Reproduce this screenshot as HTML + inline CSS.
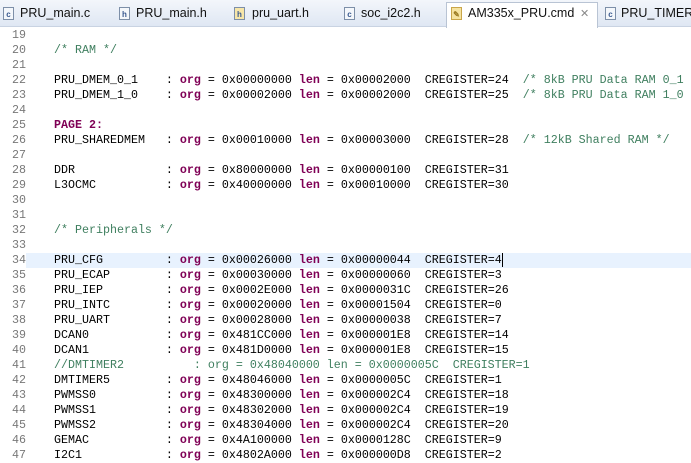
<!DOCTYPE html><html><head><style>
body{margin:0;width:691px;height:459px;overflow:hidden;background:#fff;position:relative;font-family:"Liberation Sans",sans-serif}
.bar{position:absolute;left:0;top:0;width:691px;height:27px;background:linear-gradient(#f3f6fb,#dfe7f3);border-bottom:1px solid #c9d3e2;box-sizing:border-box}
.t{position:absolute;top:6px;font-size:12.5px;color:#111;white-space:nowrap}
.ic{position:absolute;top:7px;width:11px;height:13px;border:1px solid #7d8fa8;background:#f4f7fb;font:bold 8px "Liberation Sans",sans-serif;color:#3a5a90;text-align:center;line-height:13px;box-sizing:border-box}
.act{position:absolute;left:446px;top:2px;width:152px;height:26px;background:#fff;border:1px solid #b9c4d4;border-bottom:none;box-sizing:border-box}
.code{position:absolute;top:28px;left:0;width:691px;font-family:"Liberation Mono",monospace;font-size:11.67px;line-height:15px;color:#000}
.l{height:15px;position:relative;white-space:pre}
.n{display:inline-block;width:26px;text-align:right;color:#787878;padding-right:28px}
.c{color:#3f7f5f}.k{color:#7f0055;font-weight:bold}
</style></head><body>
<div class="bar">
<div class="ic" style="left:3px">c</div><div class="t" style="left:20px">PRU_main.c</div>
<div class="ic" style="left:119px">h</div><div class="t" style="left:136px">PRU_main.h</div>
<div class="ic" style="left:234px;background:#f7e6a8">h</div><div class="t" style="left:252px">pru_uart.h</div>
<div class="ic" style="left:344px">c</div><div class="t" style="left:361px">soc_i2c2.h</div>
<div class="act"></div>
<div class="ic" style="left:451px;border-color:#c9a64a;background:#f5e3a0;color:#9a7a20">✎</div><div class="t" style="left:468px">AM335x_PRU.cmd</div>
<div class="t" style="left:580px;color:#888;font-size:11px;top:7px">✕</div>
<div class="ic" style="left:605px">c</div><div class="t" style="left:621px">PRU_TIMER.</div>
</div>
<div class="code"><div class="l"><span class="n">19</span></div><div class="l"><span class="n">20</span><span class="c">/* RAM */</span></div><div class="l"><span class="n">21</span></div><div class="l"><span class="n">22</span>PRU_DMEM_0_1    : <span class="k">org</span> = 0x00000000 <span class="k">len</span> = 0x00002000  CREGISTER=24  <span class="c">/* 8kB PRU Data RAM 0_1</span></div><div class="l"><span class="n">23</span>PRU_DMEM_1_0    : <span class="k">org</span> = 0x00002000 <span class="k">len</span> = 0x00002000  CREGISTER=25  <span class="c">/* 8kB PRU Data RAM 1_0</span></div><div class="l"><span class="n">24</span></div><div class="l"><span class="n">25</span><span class="k">PAGE 2:</span></div><div class="l"><span class="n">26</span>PRU_SHAREDMEM   : <span class="k">org</span> = 0x00010000 <span class="k">len</span> = 0x00003000  CREGISTER=28  <span class="c">/* 12kB Shared RAM */</span></div><div class="l"><span class="n">27</span></div><div class="l"><span class="n">28</span>DDR             : <span class="k">org</span> = 0x80000000 <span class="k">len</span> = 0x00000100  CREGISTER=31</div><div class="l"><span class="n">29</span>L3OCMC          : <span class="k">org</span> = 0x40000000 <span class="k">len</span> = 0x00010000  CREGISTER=30</div><div class="l"><span class="n">30</span></div><div class="l"><span class="n">31</span></div><div class="l"><span class="n">32</span><span class="c">/* Peripherals */</span></div><div class="l"><span class="n">33</span></div><div class="l"><div style="position:absolute;left:26px;top:0;right:0;height:15px;background:#e8f2fe"></div><span style="position:relative"><span class="n">34</span>PRU_CFG         : <span class="k">org</span> = 0x00026000 <span class="k">len</span> = 0x00000044  CREGISTER=4<span style="border-left:1px solid #000"></span></span></div><div class="l"><span class="n">35</span>PRU_ECAP        : <span class="k">org</span> = 0x00030000 <span class="k">len</span> = 0x00000060  CREGISTER=3</div><div class="l"><span class="n">36</span>PRU_IEP         : <span class="k">org</span> = 0x0002E000 <span class="k">len</span> = 0x0000031C  CREGISTER=26</div><div class="l"><span class="n">37</span>PRU_INTC        : <span class="k">org</span> = 0x00020000 <span class="k">len</span> = 0x00001504  CREGISTER=0</div><div class="l"><span class="n">38</span>PRU_UART        : <span class="k">org</span> = 0x00028000 <span class="k">len</span> = 0x00000038  CREGISTER=7</div><div class="l"><span class="n">39</span>DCAN0           : <span class="k">org</span> = 0x481CC000 <span class="k">len</span> = 0x000001E8  CREGISTER=14</div><div class="l"><span class="n">40</span>DCAN1           : <span class="k">org</span> = 0x481D0000 <span class="k">len</span> = 0x000001E8  CREGISTER=15</div><div class="l"><span class="n">41</span><span class="c">//DMTIMER2          : org = 0x48040000 len = 0x0000005C  CREGISTER=1</span></div><div class="l"><span class="n">42</span>DMTIMER5        : <span class="k">org</span> = 0x48046000 <span class="k">len</span> = 0x0000005C  CREGISTER=1</div><div class="l"><span class="n">43</span>PWMSS0          : <span class="k">org</span> = 0x48300000 <span class="k">len</span> = 0x000002C4  CREGISTER=18</div><div class="l"><span class="n">44</span>PWMSS1          : <span class="k">org</span> = 0x48302000 <span class="k">len</span> = 0x000002C4  CREGISTER=19</div><div class="l"><span class="n">45</span>PWMSS2          : <span class="k">org</span> = 0x48304000 <span class="k">len</span> = 0x000002C4  CREGISTER=20</div><div class="l"><span class="n">46</span>GEMAC           : <span class="k">org</span> = 0x4A100000 <span class="k">len</span> = 0x0000128C  CREGISTER=9</div><div class="l"><span class="n">47</span>I2C1            : <span class="k">org</span> = 0x4802A000 <span class="k">len</span> = 0x000000D8  CREGISTER=2</div></div>
</body></html>
